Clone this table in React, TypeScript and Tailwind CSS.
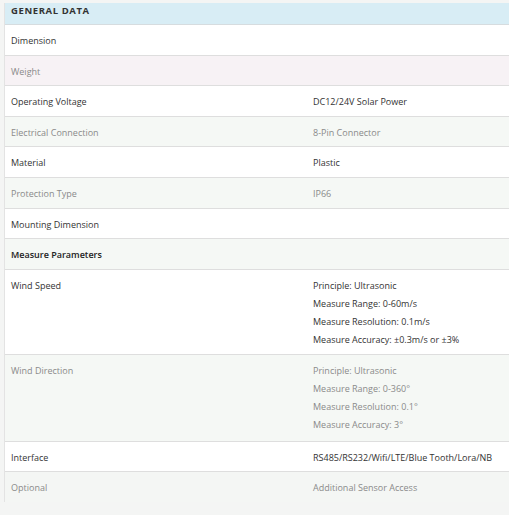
const rows: { label: string; values: string[]; muted: boolean; bg: string; bold?: boolean; pb?: string }[] = [
  { label: "Dimension", values: [], muted: false, bg: "bg-white" },
  { label: "Weight", values: [], muted: true, bg: "bg-[#f7f2f5]" },
  { label: "Operating Voltage", values: ["DC12/24V Solar Power"], muted: false, bg: "bg-white" },
  { label: "Electrical Connection", values: ["8-Pin Connector"], muted: true, bg: "bg-[#f5f8f5]" },
  { label: "Material", values: ["Plastic"], muted: false, bg: "bg-white" },
  { label: "Protection Type", values: ["IP66"], muted: true, bg: "bg-[#f5f8f5]" },
  { label: "Mounting Dimension", values: [], muted: false, bg: "bg-white" },
  { label: "Measure Parameters", values: [], muted: false, bg: "bg-[#f5f8f5]", bold: true },
  {
    label: "Wind Speed",
    values: ["Principle: Ultrasonic", "Measure Range: 0-60m/s", "Measure Resolution: 0.1m/s", "Measure Accuracy: ±0.3m/s or ±3%"],
    muted: false,
    bg: "bg-white",
    pb: "pb-[5.4px]",
  },
  {
    label: "Wind Direction",
    values: ["Principle: Ultrasonic", "Measure Range: 0-360°", "Measure Resolution: 0.1°", "Measure Accuracy: 3°"],
    muted: true,
    bg: "bg-[#f5f8f5]",
    pb: "pb-[6.2px]",
  },
  { label: "Interface", values: ["RS485/RS232/Wifi/LTE/Blue Tooth/Lora/NB"], muted: false, bg: "bg-white" },
  { label: "Optional", values: ["Additional Sensor Access"], muted: true, bg: "bg-[#f4f6f4]" },
];

export default function App() {
  return (
    <div
      className="w-[509px] h-[515px] bg-[#f4f5f4] pt-[3px] pl-[4px] overflow-hidden"
      style={{ fontFamily: '"Open Sans", sans-serif' }}
    >
      <div className="border-l border-[#e3e3e3] w-[505px]">
        <div className="h-[22px] bg-[#d8edf5] border-b border-[#d6dcdf] pl-[6px]">
          <span className="block text-[9.5px] leading-[15px] font-bold tracking-[0.6px] text-[#333333]">GENERAL DATA</span>
        </div>
        {rows.map((r, i) => {
          const pb = r.pb ?? "pb-[4.5px]";
          return (
            <div
              key={i}
              className={`flex ${r.bg} ${i < rows.length - 1 ? "border-b border-[#dedede]" : ""} text-[9px] leading-[18px] ${
                r.muted ? "text-[#8a8a8a]" : "text-[#333333]"
              }`}
            >
              <div className={`w-[301px] shrink-0 pl-[6px] pt-[7.1px] ${pb} ${r.bold ? "font-semibold text-[#222]" : ""}`}>
                {r.label}
              </div>
              <div className={`pl-[7px] pt-[7.1px] ${pb} flex flex-col`}>
                {r.values.map((v, j) => (
                  <span key={j}>{v}</span>
                ))}
              </div>
            </div>
          );
        })}
      </div>
    </div>
  );
}
